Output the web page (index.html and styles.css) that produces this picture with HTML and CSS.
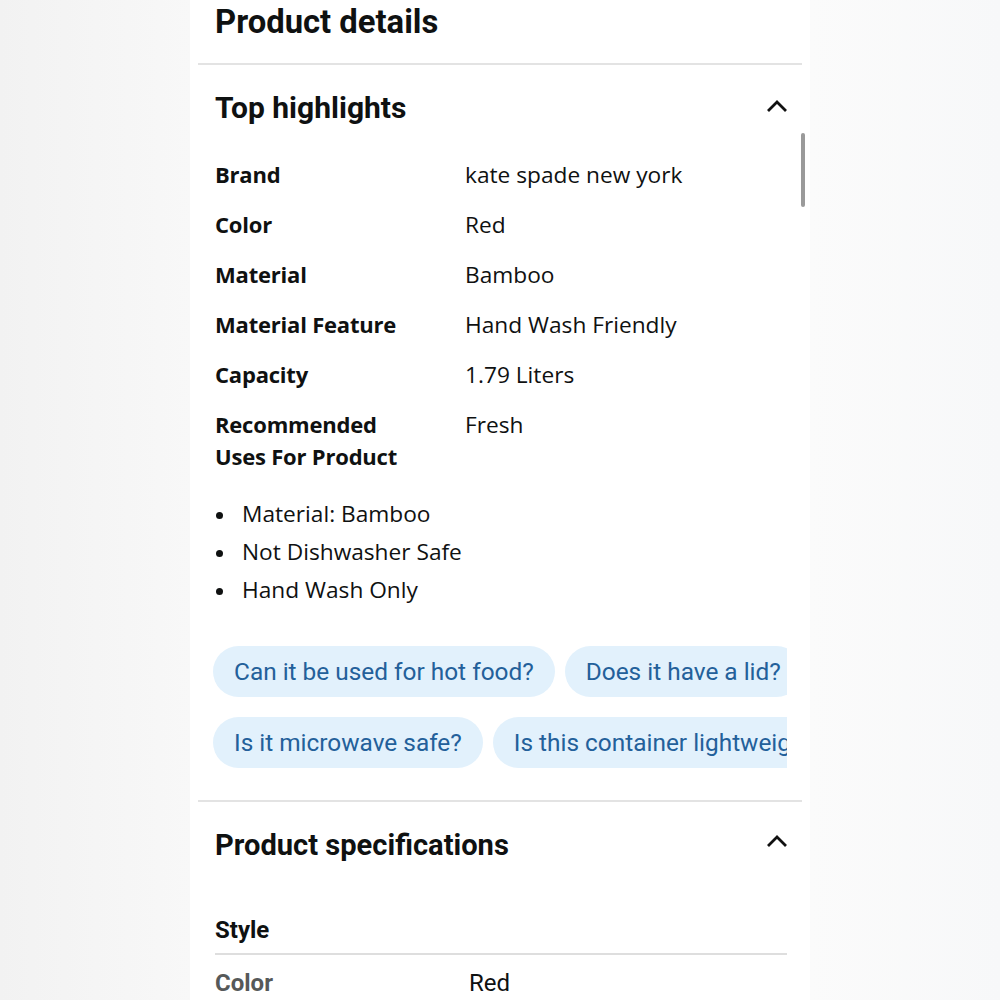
FILE: index.html
```html
<!DOCTYPE html>
<html lang="en">
<head>
<meta charset="utf-8">
<title>Product details</title>
<link rel="stylesheet" href="styles.css">
</head>
<body>
<div class="panel">
  <h1 class="title">Product details</h1>
  <hr class="divider">
  <section class="section">
    <div class="section-head">
      <h2 class="section-title">Top highlights</h2>
      <svg class="chevron" width="22" height="14" viewBox="0 0 22 14"><path d="M2 12 L11 3 L20 12" fill="none" stroke="#111" stroke-width="2.8"/></svg>
    </div>
    <div class="attrs">
      <div class="attr-label">Brand</div><div class="attr-value">kate spade new york</div>
      <div class="attr-label">Color</div><div class="attr-value">Red</div>
      <div class="attr-label">Material</div><div class="attr-value">Bamboo</div>
      <div class="attr-label">Material Feature</div><div class="attr-value">Hand Wash Friendly</div>
      <div class="attr-label">Capacity</div><div class="attr-value">1.79 Liters</div>
      <div class="attr-label">Recommended<br>Uses For Product</div><div class="attr-value">Fresh</div>
    </div>
    <ul class="bullets">
      <li>Material: Bamboo</li>
      <li>Not Dishwasher Safe</li>
      <li>Hand Wash Only</li>
    </ul>
    <div class="chips">
      <div class="chip-row">
        <span class="chip">Can it be used for hot food?</span>
        <span class="chip">Does it have a lid?</span>
      </div>
      <div class="chip-row">
        <span class="chip">Is it microwave safe?</span>
        <span class="chip">Is this container lightweight?</span>
      </div>
    </div>
  </section>
  <hr class="divider">
  <section class="section">
    <div class="section-head">
      <h2 class="section-title specs-title">Product specifications</h2>
      <svg class="chevron chevron-2" width="22" height="14" viewBox="0 0 22 14"><path d="M2 12 L11 3 L20 12" fill="none" stroke="#111" stroke-width="2.8"/></svg>
    </div>
    <h3 class="spec-group">Style</h3>
    <div class="spec-row">
      <div class="spec-label">Color</div><div class="spec-value">Red</div>
    </div>
  </section>
  <div class="scrollbar"></div>
</div>
</body>
</html>
```
FILE: styles.css
```css
html, body {
  margin: 0;
  padding: 0;
}
body {
  height: 1000px;
  overflow: hidden;
  background: linear-gradient(90deg, #f2f2f2 0%, #f8f8f8 19%, #fbfbfb 81%, #f7f8f9 100%);
  font-family: "Open Sans", "Noto Sans", sans-serif;
  color: #0f1111;
}
.panel {
  position: relative;
  width: 620px;
  height: 1000px;
  margin-left: 190px;
  background: #ffffff;
  box-sizing: border-box;
  padding-top: 4px;
  overflow: hidden;
}
.title {
  margin: 0 0 23px 25px;
  font-family: Roboto, sans-serif;
  font-size: 32.8px;
  font-weight: 700;
  line-height: 36px;
}
.divider {
  margin: 0 8px;
  border: 0;
  height: 2px;
  background: #e3e3e3;
}
.section {
  padding: 25px 23px 0 25px;
}
.section-head {
  display: flex;
  align-items: center;
  justify-content: space-between;
}
.section-title {
  margin: 0;
  font-family: Roboto, sans-serif;
  font-size: 30px;
  font-weight: 700;
  line-height: 36px;
}
.specs-title {
  font-size: 29.1px;
}
.chevron {
  display: block;
  margin-right: -1px;
  margin-top: -4px;
}
.chevron-2 {
  margin-top: -8px;
}
.attrs {
  display: grid;
  grid-template-columns: 250px 1fr;
  row-gap: 18px;
  margin-top: 32px;
  font-size: 22px;
  line-height: 32px;
}
.attr-label {
  font-weight: 700;
  letter-spacing: -0.2px;
}
.attr-value {
  font-size: 22.7px;
  position: relative;
  top: 1px;
}
.bullets {
  list-style: none;
  margin: 23px 0 0;
  padding: 0;
  font-size: 22.7px;
  line-height: 38px;
}
.bullets li {
  display: flex;
  align-items: center;
}
.bullets li::before {
  content: "";
  flex: none;
  width: 7px;
  height: 7px;
  border-radius: 50%;
  background: #0f1111;
  margin: 2px 19px 0 1px;
}
.chips {
  display: flex;
  flex-direction: column;
  gap: 20px;
  margin: 37px 0 32px -2px;
  overflow: hidden;
}
.chip-row {
  display: flex;
  gap: 10px;
  flex-wrap: nowrap;
}
.chip {
  flex: none;
  height: 51px;
  line-height: 51px;
  padding: 0 21px;
  border-radius: 26px;
  background: #e2f1fc;
  color: #23609a;
  font-family: Roboto, sans-serif;
  font-size: 24.4px;
  white-space: nowrap;
}
.spec-group {
  margin: 53px 0 0;
  font-family: Roboto, sans-serif;
  font-size: 24px;
  font-weight: 700;
  line-height: 28px;
  padding-bottom: 9px;
  border-bottom: 2px solid #dedede;
}
.spec-row {
  display: flex;
  font-family: Roboto, sans-serif;
  font-size: 24px;
  line-height: 28px;
  padding-top: 14px;
}
.spec-label {
  width: 254px;
  color: #565959;
  font-weight: 700;
}
.spec-value {
  color: #0f1111;
}
.scrollbar {
  position: absolute;
  left: 611px;
  top: 133px;
  width: 4px;
  height: 74px;
  border-radius: 2px;
  background: #9a9a9a;
}
```
